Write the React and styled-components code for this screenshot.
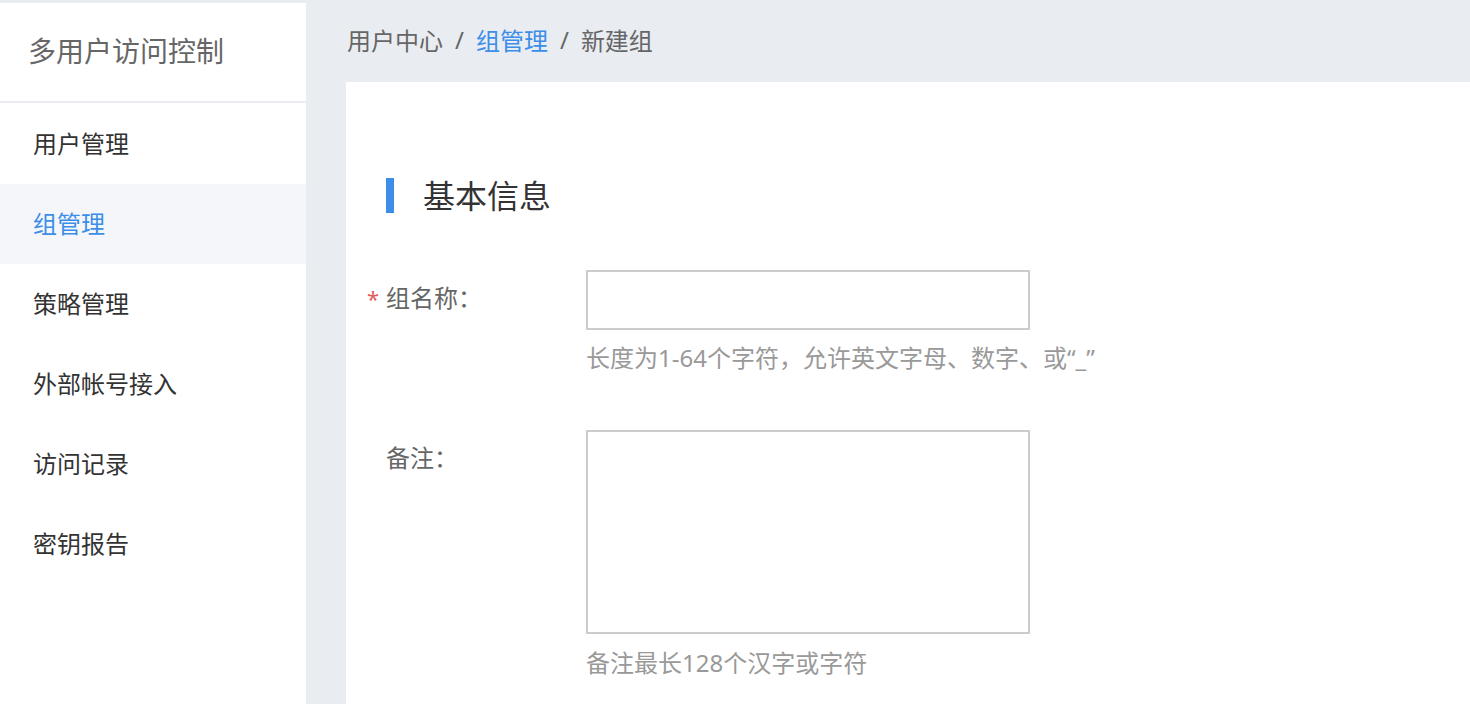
import React from "react";
import styled, { createGlobalStyle } from "styled-components";

const GlobalStyle = createGlobalStyle`
  html, body {
    margin: 0;
    padding: 0;
    height: 100%;
    background: #e9ecf1;
    overflow: hidden;
  }
  body {
    font-family: "Noto Sans", "Noto Sans CJK SC", sans-serif;
  }
  #root {
    height: 100%;
  }
`;

const Layout = styled.div`
  display: flex;
  height: 100%;
  padding-top: 3px;
  box-sizing: border-box;
`;

const Sidebar = styled.aside`
  width: 306px;
  flex-shrink: 0;
  background: #fff;
  display: flex;
  flex-direction: column;
`;

const SideTitle = styled.div`
  height: 100px;
  box-sizing: border-box;
  padding: 0 0 4px 28px;
  display: flex;
  align-items: center;
  font-size: 28px;
  color: #666;
  border-bottom: 2px solid #e9ecf1;
  margin-bottom: 1px;
`;

const MenuItem = styled.div`
  height: 80px;
  box-sizing: border-box;
  padding: 0 0 4px 33px;
  display: flex;
  align-items: center;
  font-size: 24px;
  color: ${p => (p.active ? "#3c8ee8" : "#333")};
  background: ${p => (p.active ? "#f5f6fa" : "#fff")};
`;

const Main = styled.main`
  flex: 1;
  display: flex;
  flex-direction: column;
  min-width: 0;
  margin-top: -3px;
`;

const Breadcrumb = styled.nav`
  height: 82px;
  flex-shrink: 0;
  box-sizing: border-box;
  padding: 0 0 4px 41px;
  display: flex;
  align-items: center;
  font-size: 24px;
  color: #666;
`;

const Crumb = styled.span`
  color: ${p => (p.link ? "#3c8ee8" : "#666")};
`;

const Sep = styled.span`
  margin: 0 12px;
  color: #666;
`;

const Panel = styled.section`
  flex: 1;
  overflow: hidden;
  margin-left: 40px;
  background: #fff;
  padding: 96px 0 0 40px;
`;

const SectionTitle = styled.h2`
  margin: 0 0 57px;
  height: 35px;
  box-sizing: border-box;
  padding: 0 0 3px 29px;
  display: flex;
  align-items: center;
  border-left: 8px solid #3c8ee8;
  font-size: 32px;
  font-weight: 400;
  color: #333;
`;

const Row = styled.div`
  display: flex;
  margin-bottom: 56px;
`;

const Label = styled.label`
  width: 200px;
  flex-shrink: 0;
  line-height: 56px;
  font-size: 24px;
  color: #666;
`;

const Star = styled.span`
  display: inline-block;
  width: 19px;
  margin-left: -19px;
  color: #e45a5a;
  font-size: 22px;
`;

const Field = styled.div`
  display: flex;
  flex-direction: column;
`;

const Input = styled.input`
  width: 444px;
  height: 60px;
  box-sizing: border-box;
  border: 2px solid #ccc;
  outline: none;
  font-size: 24px;
  padding: 0 12px;
`;

const TextArea = styled.textarea`
  width: 444px;
  height: 204px;
  box-sizing: border-box;
  border: 2px solid #ccc;
  outline: none;
  resize: none;
  font-size: 24px;
  padding: 10px 12px;
`;

const Hint = styled.div`
  margin-top: ${p => p.gap || 12}px;
  line-height: 32px;
  font-size: 24px;
  color: #999;
`;

const menu = ["用户管理", "组管理", "策略管理", "外部帐号接入", "访问记录", "密钥报告"];

export default function App() {
  return (
    <>
      <GlobalStyle />
      <Layout>
        <Sidebar>
          <SideTitle>多用户访问控制</SideTitle>
          {menu.map(m => (
            <MenuItem key={m} active={m === "组管理"}>
              {m}
            </MenuItem>
          ))}
        </Sidebar>
        <Main>
          <Breadcrumb>
            <Crumb>用户中心</Crumb>
            <Sep>/</Sep>
            <Crumb link>组管理</Crumb>
            <Sep>/</Sep>
            <Crumb>新建组</Crumb>
          </Breadcrumb>
          <Panel>
            <SectionTitle>基本信息</SectionTitle>
            <Row>
              <Label>
                <Star>*</Star>组名称：
              </Label>
              <Field>
                <Input />
                <Hint>长度为1-64个字符，允许英文字母、数字、或“_”</Hint>
              </Field>
            </Row>
            <Row>
              <Label>备注：</Label>
              <Field>
                <TextArea />
                <Hint gap={13}>备注最长128个汉字或字符</Hint>
              </Field>
            </Row>
          </Panel>
        </Main>
      </Layout>
    </>
  );
}
